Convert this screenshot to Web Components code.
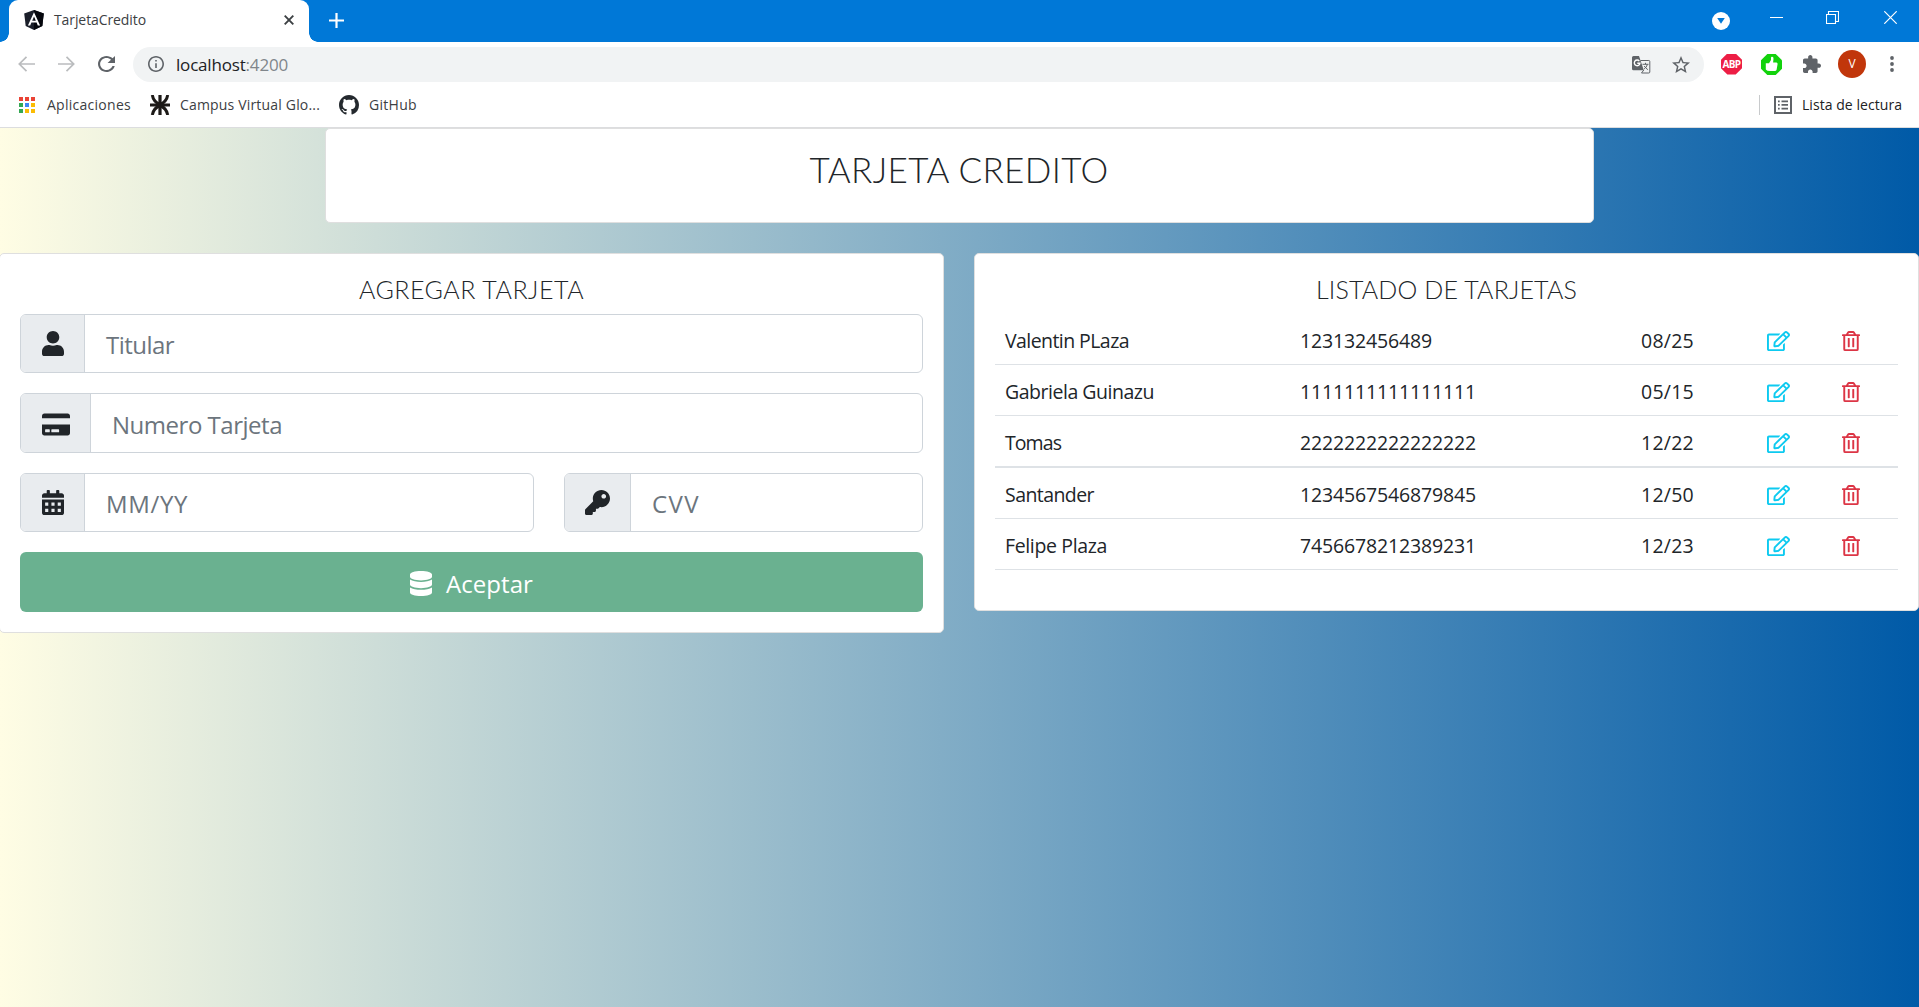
<!DOCTYPE html>
<html lang="es">
<head>
<meta charset="utf-8">
<title>TarjetaCredito</title>
<style>
html,body{margin:0;height:100%;overflow:hidden;background:#fff}
body{font-family:"Open Sans","Noto Sans",sans-serif;color:#212529}
</style>
</head>
<body>
<app-window></app-window>
<script>
const define=(name,html,setup)=>customElements.define(name,class extends HTMLElement{
  connectedCallback(){
    if(this.shadowRoot)return;
    const root=this.attachShadow({mode:'open'});
    root.innerHTML=typeof html==='function'?html(this):html;
    if(setup)setup(this,root);
  }
});

/* Icon library: [viewBox, markup] */
const I={
user:['0 0 448 512','<path d="M224 256c70.7 0 128-57.3 128-128S294.7 0 224 0 96 57.3 96 128s57.3 128 128 128zm89.6 32h-16.7c-22.2 10.2-46.9 16-72.9 16s-50.6-5.8-72.9-16h-16.7C60.2 288 0 348.2 0 422.4V464c0 26.5 21.5 48 48 48h352c26.5 0 48-21.5 48-48v-41.6c0-74.2-60.2-134.4-134.4-134.4z"/>'],
card:['0 0 576 512','<path d="M0 432c0 26.5 21.5 48 48 48h480c26.5 0 48-21.5 48-48V256H0v176zm192-68c0-6.600 5.400-12 12-12h136c6.600 0 12 5.400 12 12v40c0 6.600-5.400 12-12 12H204c-6.600 0-12-5.400-12-12v-40zm-128 0c0-6.600 5.400-12 12-12h72c6.600 0 12 5.400 12 12v40c0 6.600-5.400 12-12 12H76c-6.600 0-12-5.400-12-12v-40zM576 80v48H0V80c0-26.500 21.500-48 48-48h480c26.500 0 48 21.500 48 48z"/>'],
calendar:['0 0 448 512','<path fill-rule="evenodd" d="M0 464c0 26.5 21.5 48 48 48h352c26.5 0 48-21.500 48-48V192H0v272zM64 256h64v64H64zM192 256h64v64h-64zM320 256h64v64h-64zM64 384h64v64H64zM192 384h64v64h-64zM320 384h64v64h-64zM400 64h-48V16c0-8.800-7.200-16-16-16h-32c-8.800 0-16 7.200-16 16v48H160V16c0-8.800-7.200-16-16-16h-32c-8.800 0-16 7.200-16 16v48H48C21.500 64 0 85.500 0 112v48h448v-48c0-26.500-21.500-48-48-48z"/>'],
key:['0 0 512 512','<path d="M512 176C512 273.200 433.200 352 336 352c-11.220 0-22.190-1.060-32.830-3.070l-24 27A24 24 0 0 1 261.220 384H224v40c0 13.250-10.750 24-24 24h-40v40c0 13.250-10.750 24-24 24H24c-13.250 0-24-10.750-24-24v-78.060c0-6.360 2.530-12.470 7.030-16.970l161.800-161.800C163.110 213.810 160 195.270 160 176 160 78.800 238.800 0 336 0 433.490 0 512 78.510 512 176zM336 128c0 26.510 21.490 48 48 48s48-21.490 48-48-21.490-48-48-48-48 21.490-48 48z"/>'],
database:['0 0 448 512','<path d="M448 73.143v45.714C448 159.143 347.667 192 224 192S0 159.143 0 118.857V73.143C0 32.857 100.333 0 224 0s224 32.857 224 73.143zM448 176v102.857C448 319.143 347.667 352 224 352S0 319.143 0 278.857V176c48.125 33.143 136.208 48.572 224 48.572S399.874 209.143 448 176zm0 160v102.857C448 479.143 347.667 512 224 512S0 479.143 0 438.857V336c48.125 33.143 136.208 48.572 224 48.572S399.874 369.143 448 336z"/>'],
edit:['0 0 576 512','<path d="M402.3 344.9l32-32c5-5 13.700-1.500 13.700 5.700V464c0 26.500-21.500 48-48 48H48c-26.500 0-48-21.500-48-48V112c0-26.500 21.500-48 48-48h273.500c7.100 0 10.700 8.600 5.700 13.700l-32 32c-1.500 1.500-3.500 2.300-5.700 2.300H48v352h352V350.500c0-2.100.8-4.100 2.300-5.600zm156.600-201.800L296.300 405.700l-90.400 10c-26.200 2.900-48.500-19.200-45.600-45.600l10-90.400L432.900 17.100c22.900-22.900 59.900-22.900 82.700 0l43.200 43.200c22.900 22.900 22.900 60 .1 82.800zM460.100 174L402 115.900 216.200 301.800l-7.300 65.300 65.300-7.300L460.100 174zm64.800-79.700l-43.200-43.200c-4.100-4.100-10.800-4.100-14.800 0L436 82l58.100 58.100 30.900-30.900c4-4.200 4-10.800-.1-14.900z"/>'],
trash:['0 0 448 512','<path d="M268 416h24a12 12 0 0 0 12-12V188a12 12 0 0 0-12-12h-24a12 12 0 0 0-12 12v216a12 12 0 0 0 12 12zM432 80h-82.410l-34-56.700A48 48 0 0 0 274.410 0H173.590a48 48 0 0 0-41.160 23.300L98.410 80H16A16 16 0 0 0 0 96v16a16 16 0 0 0 16 16h16v336a48 48 0 0 0 48 48h288a48 48 0 0 0 48-48V128h16a16 16 0 0 0 16-16V96a16 16 0 0 0-16-16zM171.840 50.910A6 6 0 0 1 177 48h94a6 6 0 0 1 5.150 2.910L293.610 80H154.390zM368 464H80V128h288zm-212-48h24a12 12 0 0 0 12-12V188a12 12 0 0 0-12-12h-24a12 12 0 0 0-12 12v216a12 12 0 0 0 12 12z"/>'],
angular:['0 0 20 20','<path fill="#1b1f2a" d="M10 0L19.800 3.400 18.300 16 10 20 1.700 16 .2 3.400z"/><path fill="#05070d" d="M10 0l9.800 3.400L18.300 16 10 20z"/><path fill="#fff" fill-rule="evenodd" d="M10 2.300L3.900 15.500h2.300l1.200-3h5.200l1.200 3h2.300zM10 6.500l1.800 4.200H8.200z"/>'],
close:['0 0 10 10','<path d="M.7.700l8.600 8.600M9.300.7L.7 9.300" fill="none" stroke="currentColor" stroke-width="1.900"/>'],
plus:['0 0 15 15','<path d="M7.500 0v15M0 7.500h15" fill="none" stroke="currentColor" stroke-width="2.200"/>'],
drop:['0 0 18 18','<circle cx="9" cy="9" r="9"/><path fill="#0078d7" d="M5.200 6h7.600L9 11.800z"/>'],
min:['0 0 13 13','<path d="M0 6.500h13" stroke="currentColor"/>'],
restore:['0 0 13 13','<path d="M.5 3.500h9v9h-9zM2.500 3V.5h10v10H10" fill="none" stroke="currentColor" stroke-width="1.100"/>'],
wclose:['0 0 13 13','<path d="M.3.300l12.400 12.400M12.700.3L.3 12.700" fill="none" stroke="currentColor" stroke-width="1.200"/>'],
back:['0 0 17 16','<path d="M17 8H1.500M8.500.8L1.300 8l7.200 7.200" fill="none" stroke="currentColor" stroke-width="1.700"/>'],
fwd:['0 0 17 16','<path d="M0 8h15.500M8.500.8L15.700 8l-7.200 7.200" fill="none" stroke="currentColor" stroke-width="1.700"/>'],
reload:['4 4 16 16','<path d="M17.650 6.350C16.200 4.900 14.210 4 12 4c-4.420 0-7.990 3.580-7.990 8s3.570 8 7.990 8c3.730 0 6.840-2.550 7.730-6h-2.080c-.82 2.330-3.040 4-5.650 4-3.310 0-6-2.690-6-6s2.690-6 6-6c1.660 0 3.140.69 4.220 1.780L13 11h7V4l-2.350 2.350z"/>'],
info:['2 2 20 20','<path d="M11 7h2v2h-2zm0 4h2v6h-2zm1-9C6.480 2 2 6.480 2 12s4.480 10 10 10 10-4.480 10-10S17.520 2 12 2zm0 18c-4.410 0-8-3.590-8-8s3.590-8 8-8 8 3.590 8 8-3.590 8-8 8z"/>'],
translate:['0 0 19 18','<path d="M8.500 4.500h8.300q1 0 1 1v10.500q0 1-1 1H9.500l2.300-3" fill="#f1f3f4" stroke="currentColor" stroke-width="1"/><path d="M1.500 0H7l4.800 14.200H1.500A1.500 1.500 0 0 1 0 12.700V1.500A1.500 1.500 0 0 1 1.500 0z"/><path d="M7.300 5.100A2.800 2.800 0 1 0 7.900 7.300H5.300" fill="none" stroke="#fff" stroke-width="1.400"/><path d="M10.500 8.300h6M13.500 6.800v1.500M15.300 8.500c-.6 2.200-1.800 3.500-3.200 4.500M12.200 10c1 1.600 2.200 2.700 3.700 3.700" fill="none" stroke="currentColor" stroke-width="1"/>'],
star:['2 2 20 19','<path d="M22 9.240l-7.190-.62L12 2 9.190 8.630 2 9.240l5.460 4.730L5.820 21 12 17.270 18.180 21l-1.630-7.030L22 9.240zM12 15.400l-3.760 2.270 1-4.280-3.320-2.880 4.380-.38L12 6.100l1.710 4.040 4.380.38-3.320 2.880 1 4.280L12 15.400z"/>'],
like:['0 0 21 21','<path fill="#12d20c" d="M6.300 0h8.400L21 6.300v8.400L14.700 21H6.300L0 14.700V6.300z"/><path fill="#fff" d="M4.800 9.300H8l2-3.300V4q0-1.400 1.200-1.200 1.400.2 1.300 2l-.4 3.700h3.300q1.300.2 1.200 1.600l-1 5.600q-.3 1.300-1.800 1.300H9q-3 0-4.200-1.500z"/>'],
puzzle:['2 1 21 21','<path d="M20.5 11H19V7c0-1.100-.9-2-2-2h-4V3.500C13 2.120 11.880 1 10.500 1S8 2.120 8 3.500V5H4c-1.100 0-1.990.9-1.990 2v3.800H3.500c1.490 0 2.700 1.210 2.700 2.700s-1.210 2.700-2.700 2.700H2V20c0 1.100.9 2 2 2h3.800v-1.500c0-1.490 1.210-2.700 2.700-2.700 1.490 0 2.700 1.210 2.700 2.700V22H17c1.100 0 2-.9 2-2v-4h1.500c1.380 0 2.500-1.120 2.500-2.500S21.880 11 20.500 11z"/>'],
dots:['0 0 4 16','<circle cx="2" cy="2" r="1.900"/><circle cx="2" cy="8" r="1.900"/><circle cx="2" cy="14" r="1.900"/>'],
apps:['0 0 16 16','<path fill="#ea4335" d="M0 0h4v4H0zM6 0h4v4H6zM12 0h4v4h-4z"/><path fill="#34a853" d="M0 6h4v4H0zM0 12h4v4H0z"/><path fill="#4285f4" d="M6 6h4v4H6z"/><path fill="#fbbc04" d="M12 6h4v4h-4zM6 12h4v4H6zM12 12h4v4h-4z"/>'],
campus:['0 0 20 20','<path d="M10 0v20M0 10h20" stroke="#1d1a18" stroke-width="3.200"/><path d="M2.300 0C3 4.500 6 7.800 10 9.500 14 7.800 17 4.500 17.700 0M2.300 20C3 15.500 6 12.200 10 10.500 14 12.200 17 15.500 17.700 20" fill="none" stroke="#1d1a18" stroke-width="3"/>'],
github:['0 0 16 16','<path d="M8 0C3.580 0 0 3.580 0 8c0 3.540 2.290 6.530 5.470 7.590.4.070.55-.17.55-.38 0-.19-.01-.82-.01-1.490-2.010.37-2.530-.49-2.690-.94-.09-.23-.48-.94-.82-1.130-.28-.15-.68-.52-.01-.53.63-.01 1.080.58 1.230.82.72 1.210 1.870.87 2.330.66.07-.52.28-.87.51-1.070-1.780-.2-3.640-.89-3.640-3.950 0-.87.31-1.590.82-2.150-.08-.2-.36-1.020.08-2.120 0 0 .67-.21 2.200.82.64-.18 1.320-.27 2-.27s1.360.09 2 .27c1.530-1.040 2.200-.82 2.200-.82.44 1.100.16 1.920.08 2.120.51.56.82 1.270.82 2.150 0 3.070-1.870 3.750-3.650 3.950.29.25.54.73.54 1.480 0 1.070-.01 1.930-.01 2.200 0 .21.15.46.55.38A8.010 8.010 0 0 0 16 8c0-4.420-3.580-8-8-8z"/>'],
list:['0 0 18 18','<path d="M1 1h16v16H1z" fill="none" stroke="currentColor" stroke-width="2"/><path d="M4 4.500h1.700v1.700H4zM4 8.100h1.700v1.700H4zM4 11.700h1.700v1.700H4zM7.500 4.500H14v1.700H7.500zM7.500 8.100H14v1.700H7.500zM7.500 11.700H14v1.700H7.500z"/>']
};
define('ui-icon',el=>{
  const [vb,body]=I[el.getAttribute('name')],w=el.getAttribute('w'),h=el.getAttribute('h')||w;
  return `<style>:host{display:block;flex:none;width:${w}px;height:${h}px}svg{display:block}</style><svg width="${w}" height="${h}" viewBox="${vb}" preserveAspectRatio="none" fill="currentColor">${body}</svg>`;
});

define('chrome-tabs',`<style>
:host{display:flex;height:42px;background:#0078d7;color:#fff;align-items:flex-start}
.edge{width:9px;height:42px;background:radial-gradient(circle at 0 0,#0078d7 8.500px,#fff 9px) 0 100%/9px 9px no-repeat}
.edge.r{background-image:radial-gradient(circle at 100% 0,#0078d7 8.500px,#fff 9px)}
.tab{box-sizing:border-box;width:300px;height:42px;background:#fff;border-radius:9px 9px 0 0;display:flex;align-items:flex-start;padding:10px 15px 0;color:#3c4043;font-size:14px;line-height:20px}
.tab text-run{margin-left:10px}
</style>
<div class="edge"></div>
<div class="tab"><ui-icon name="angular" w="20"></ui-icon><text-run w="92">TarjetaCredito</text-run><span style="flex:1"></span><ui-icon name="close" w="10" style="margin-top:5px"></ui-icon></div>
<div class="edge r"></div>
<ui-icon name="plus" w="15" style="margin:13px 0 0 11px"></ui-icon>
<span style="flex:1"></span>
<ui-icon name="drop" w="18" style="margin:12px 40px 0 0"></ui-icon>
<ui-icon name="min" w="13" style="margin:11px 43px 0 0"></ui-icon>
<ui-icon name="restore" w="13" style="margin:11px 45px 0 0"></ui-icon>
<ui-icon name="wclose" w="13" style="margin:11px 22px 0 0"></ui-icon>`);

define('chrome-toolbar',`<style>
:host{display:flex;align-items:center;height:44px;color:#5f6368;padding:0 25px 0 18px}
.box{flex:1;height:35px;border-radius:18px;background:#f1f3f4;display:flex;align-items:center;margin:0 17px 0 18px;padding:0 14px;font-size:17px;line-height:24px}
b{font-weight:400;color:#202124}
.abp{width:21px;height:21px;background:#ed1e45;clip-path:polygon(30% 0,70% 0,100% 30%,100% 70%,70% 100%,30% 100%,0 70%,0 30%);color:#fff;font:bold 10px/21px "Open Sans",sans-serif;display:flex;justify-content:center;letter-spacing:-.6px}
.av{width:28px;height:28px;border-radius:50%;background:#c1360b;color:#fff;font-size:12px;line-height:27px;text-align:center;margin:0 24px 0 17px}
</style>
<ui-icon name="back" w="17" h="16" style="color:#babcbe"></ui-icon>
<ui-icon name="fwd" w="17" h="16" style="color:#babcbe;margin-left:23px"></ui-icon>
<ui-icon name="reload" w="17" h="16" style="margin-left:23px"></ui-icon>
<div class="box"><ui-icon name="info" w="16" style="margin-left:1px"></ui-icon><text-run w="112" style="margin:1px 0 0 12px;color:#80868b"><b>localhost</b>:4200</text-run><span style="flex:1"></span><ui-icon name="translate" w="19" h="18" style="margin-top:1px"></ui-icon><ui-icon name="star" w="18" h="17" style="margin-left:21px"></ui-icon></div>
<div class="abp">ABP</div>
<ui-icon name="like" w="21" style="margin-left:19px"></ui-icon>
<ui-icon name="puzzle" w="18" style="margin-left:21px"></ui-icon>
<div class="av">V</div>
<ui-icon name="dots" w="4" h="16"></ui-icon>`);

define('chrome-bookmarks',`<style>
:host{display:flex;align-items:center;box-sizing:border-box;height:42px;padding:0 17px 4px 19px;border-bottom:1px solid #dcdddf;color:#3c4043;font-size:14px;line-height:20px}
i{width:1px;height:20px;background:#c8cacc;margin-right:14px}
</style>
<ui-icon name="apps" w="16"></ui-icon><text-run w="84" style="margin-left:12px">Aplicaciones</text-run>
<ui-icon name="campus" w="20" style="margin-left:19px"></ui-icon><text-run w="140" style="margin-left:10px">Campus Virtual Glo...</text-run>
<ui-icon name="github" w="20" style="margin-left:19px;color:#24292e"></ui-icon><text-run w="48" style="margin-left:10px">GitHub</text-run>
<span style="flex:1"></span><i></i><ui-icon name="list" w="18" style="color:#5f6368"></ui-icon><text-run w="100" style="margin-left:10px;color:#202124">Lista de lectura</text-run>`);

define('ui-card',`<style>
:host{display:block;box-sizing:border-box;background:#fff;border:1px solid #dfdfdf;border-radius:5px;padding:20px}
</style><slot></slot>`);

define('card-heading',`<style>
:host{display:block;text-align:center;font-family:Lato,sans-serif;font-weight:300;font-size:25px;line-height:30px;margin-bottom:10px}
:host([big]){font-size:35px;line-height:42px;margin:-1px 0 0}
</style><slot></slot>`);

define('input-group',el=>`<style>
:host{display:flex;box-sizing:border-box;height:var(--h,59px);border:1px solid #ced4da;border-radius:6px;overflow:hidden;font-size:24px;line-height:36px;color:#6c757d}
.add{box-sizing:border-box;flex:none;display:flex;align-items:center;padding:var(--drop,0) 0 0 var(--in,21px);background:#e9ecef;border-right:1px solid #ced4da;color:#212529;width:${el.getAttribute('add')}px}
.field{flex:1;display:flex;align-items:center;padding:3px 20px 0 21px}
</style><div class="add"><ui-icon name="${el.getAttribute('icon')}" w="${el.getAttribute('iw')}" h="25"></ui-icon></div><div class="field"><text-run w="${el.getAttribute('tw')}">${el.getAttribute('placeholder')}</text-run></div>`);

define('accept-button',`<style>
:host{display:flex;align-items:center;justify-content:center;height:60px;border-radius:6px;background:#6ab190;color:#fff;font-size:24px;line-height:36px}
</style><ui-icon name="database" w="22" h="25" style="margin-top:3px"></ui-icon><text-run w="87" style="margin:4px 0 0 14px">Aceptar</text-run>`);

define('card-form',`<style>
:host{display:block;margin-left:-1px}
.stack{display:flex;flex-direction:column;gap:20px}
.two{display:grid;grid-template-columns:514px 1fr;gap:30px}
</style><ui-card><card-heading><text-run w="225">AGREGAR TARJETA</text-run></card-heading>
<div class="stack">
<input-group icon="user" iw="22" add="64" tw="68" placeholder="Titular"></input-group>
<input-group icon="card" iw="28" add="70" tw="170" placeholder="Numero Tarjeta" style="--h:60px;--drop:2px"></input-group>
<div class="two"><input-group icon="calendar" iw="22" add="64" tw="82" placeholder="MM/YY"></input-group><input-group icon="key" iw="25" add="66" tw="48" placeholder="CVV" style="--in:20px"></input-group></div>
<accept-button></accept-button>
</div></ui-card>`);

define('card-row',el=>{
  const a=n=>el.getAttribute(n);
  return `<style>
:host{display:grid;box-sizing:border-box;grid-template-columns:295px 341px 126px 75px 1fr;align-items:center;height:51px;padding:4px 0 0 10px;border-bottom:1px solid #dee2e6;font-size:19.500px;line-height:30px}
:host(:nth-of-type(3)){height:52px;border-bottom-width:2px}
.e{color:#0dcaf0}.t{color:#dc3545}
ui-icon{margin-top:-1px}
</style><text-run w="${a('nw')}">${a('name')}</text-run><text-run w="${a('cw')}">${a('number')}</text-run><text-run w="53">${a('date')}</text-run><ui-icon class="e" name="edit" w="23" h="20"></ui-icon><ui-icon class="t" name="trash" w="18" h="20"></ui-icon>`;
});

define('card-list',`<style>:host{display:block}ui-card{height:358px}</style>
<ui-card><card-heading><text-run w="261">LISTADO DE TARJETAS</text-run></card-heading>
<card-row name="Valentin PLaza" nw="124" number="123132456489" cw="132" date="08/25"></card-row>
<card-row name="Gabriela Guinazu" nw="149" number="1111111111111111" cw="176" date="05/15"></card-row>
<card-row name="Tomas" nw="56" number="2222222222222222" cw="176" date="12/22"></card-row>
<card-row name="Santander" nw="89" number="1234567546879845" cw="176" date="12/50"></card-row>
<card-row name="Felipe Plaza" nw="102" number="7456678212389231" cw="176" date="12/23"></card-row>
</ui-card>`);

define('app-page',`<style>
:host{display:block;flex:1;background:linear-gradient(to right,#fffde4,#005aa7)}
.top{display:flex;justify-content:center}
.top ui-card{width:1269px;height:95px;margin-right:1px}
.cols{display:grid;grid-template-columns:944px 1fr;gap:30px;margin-top:30px;align-items:start}
</style>
<div class="top"><ui-card><card-heading big><text-run w="299">TARJETA CREDITO</text-run></card-heading></ui-card></div>
<div class="cols"><card-form></card-form><card-list></card-list></div>`);

define('app-window',`<style>:host{display:flex;flex-direction:column;height:100vh}</style>
<chrome-tabs></chrome-tabs><chrome-toolbar></chrome-toolbar><chrome-bookmarks></chrome-bookmarks><app-page></app-page>`);

/* Text run tracked to a given advance width */
define('text-run','<style>:host{display:inline-block;white-space:nowrap;justify-self:start;flex:none}</style><slot></slot>',el=>{
  const w=+el.getAttribute('w'),n=el.textContent.length;
  el.style.letterSpacing=((w-el.getBoundingClientRect().width)/n).toFixed(3)+'px';
});
</script>
</body>
</html>
